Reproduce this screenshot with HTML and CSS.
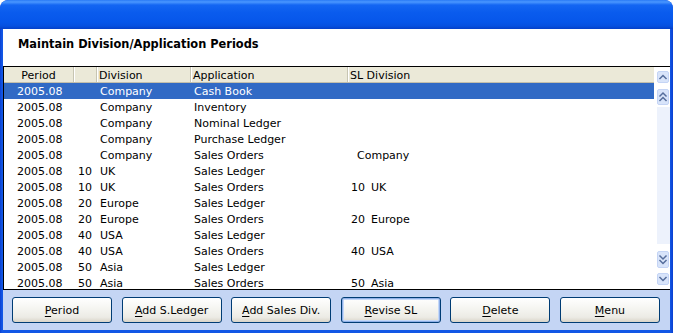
FILE: index.html
```html
<!DOCTYPE html>
<html>
<head>
<meta charset="utf-8">
<link rel="stylesheet" href="styles.css">
</head>
<body>
<div class="window">
  <div class="titlebar"></div>
  <div class="client">
    <div class="heading">Maintain Division/Application Periods</div>
    <div class="grid">
      <div class="table">
        <div class="row head">
          <div class="c period">Period</div>
          <div class="c code"></div>
          <div class="c div">Division</div>
          <div class="c app">Application</div>
          <div class="c sl">SL Division</div>
        </div>
        <div class="rows">
          <div class="row sel"><div class="c period">2005.08</div><div class="c code"></div><div class="c div">Company</div><div class="c app">Cash Book</div><div class="c sl"></div></div>
          <div class="row"><div class="c period">2005.08</div><div class="c code"></div><div class="c div">Company</div><div class="c app">Inventory</div><div class="c sl"></div></div>
          <div class="row"><div class="c period">2005.08</div><div class="c code"></div><div class="c div">Company</div><div class="c app">Nominal Ledger</div><div class="c sl"></div></div>
          <div class="row"><div class="c period">2005.08</div><div class="c code"></div><div class="c div">Company</div><div class="c app">Purchase Ledger</div><div class="c sl"></div></div>
          <div class="row"><div class="c period">2005.08</div><div class="c code"></div><div class="c div">Company</div><div class="c app">Sales Orders</div><div class="c sl"><span class="slname">Company</span></div></div>
          <div class="row"><div class="c period">2005.08</div><div class="c code">10</div><div class="c div">UK</div><div class="c app">Sales Ledger</div><div class="c sl"></div></div>
          <div class="row"><div class="c period">2005.08</div><div class="c code">10</div><div class="c div">UK</div><div class="c app">Sales Orders</div><div class="c sl"><span class="slc">10</span>UK</div></div>
          <div class="row"><div class="c period">2005.08</div><div class="c code">20</div><div class="c div">Europe</div><div class="c app">Sales Ledger</div><div class="c sl"></div></div>
          <div class="row"><div class="c period">2005.08</div><div class="c code">20</div><div class="c div">Europe</div><div class="c app">Sales Orders</div><div class="c sl"><span class="slc">20</span>Europe</div></div>
          <div class="row"><div class="c period">2005.08</div><div class="c code">40</div><div class="c div">USA</div><div class="c app">Sales Ledger</div><div class="c sl"></div></div>
          <div class="row"><div class="c period">2005.08</div><div class="c code">40</div><div class="c div">USA</div><div class="c app">Sales Orders</div><div class="c sl"><span class="slc">40</span>USA</div></div>
          <div class="row"><div class="c period">2005.08</div><div class="c code">50</div><div class="c div">Asia</div><div class="c app">Sales Ledger</div><div class="c sl"></div></div>
          <div class="row"><div class="c period">2005.08</div><div class="c code">50</div><div class="c div">Asia</div><div class="c app">Sales Orders</div><div class="c sl"><span class="slc">50</span>Asia</div></div>
        </div>
      </div>
      <div class="scroll">
        <svg class="sb sb1 up1" width="12" height="12" viewBox="0 0 12 12"><rect x="0.5" y="0.5" width="11" height="11" rx="1.5" class="sbbg"/><polyline points="3,7.5 6,4.5 9,7.5" class="chev"/></svg>
        <svg class="sb sb2 up2" width="12" height="16" viewBox="0 0 12 16"><rect x="0.5" y="0.5" width="11" height="15" rx="1.5" class="sbbg"/><polyline points="3,7 6,4 9,7" class="chev"/><polyline points="3,11.5 6,8.5 9,11.5" class="chev"/></svg>
        <div class="track"></div>
        <svg class="sb sb2 dn2" width="12" height="17" viewBox="0 0 12 17"><rect x="0.5" y="0.5" width="11" height="16" rx="1.5" class="sbbg"/><polyline points="3,5 6,8 9,5" class="chev"/><polyline points="3,9.5 6,12.5 9,9.5" class="chev"/></svg>
        <svg class="sb sb1 dn1" width="12" height="12" viewBox="0 0 12 12"><rect x="0.5" y="0.5" width="11" height="11" rx="1.5" class="sbbg"/><polyline points="3,4.5 6,7.5 9,4.5" class="chev"/></svg>
      </div>
    </div>
    <div class="footer">
      <button class="btn"><u>P</u>eriod</button>
      <button class="btn"><u>A</u>dd S.Ledger</button>
      <button class="btn"><u>A</u>dd Sales Div.</button>
      <button class="btn focus"><u>R</u>evise SL</button>
      <button class="btn"><u>D</u>elete</button>
      <button class="btn"><u>M</u>enu</button>
    </div>
  </div>
</div>
</body>
</html>
```
FILE: styles.css
```css
html, body {
  margin: 0;
  padding: 0;
  background: #ffffff;
}
.window {
  width: 673px;
  height: 333px;
  box-sizing: border-box;
  background: linear-gradient(90deg, #0a3fd0 0, #1257e6 2px, #1257e6 670px, #0a3fd0 673px);
  border-radius: 8px 8px 0 0;
  display: flex;
  flex-direction: column;
  overflow: hidden;
  font-family: "DejaVu Sans", sans-serif;
  font-size: 11px;
}
.titlebar {
  height: 29px;
  flex: none;
  background: linear-gradient(180deg, #2a7af5 0, #4a97ff 2px, #1466f2 5px, #0a5cee 12px, #0656ea 22px, #0650e0 26px, #0440c8 29px);
  border-radius: 8px 8px 0 0;
}
.client {
  margin: 0 3px 3px 3px;
  flex: 1;
  display: flex;
  flex-direction: column;
  min-height: 0;
}
.heading {
  height: 37px;
  flex: none;
  background: #ffffff;
  padding: 8px 0 0 15px;
  box-sizing: border-box;
  font-weight: bold;
  font-size: 11.4px;
  line-height: 14px;
  color: #000;
}
.grid {
  height: 223px;
  flex: none;
  box-sizing: border-box;
  border-top: 1px solid #000;
  border-left: 1px solid #000;
  background: #fff;
  display: flex;
}
.table {
  width: 650px;
  flex: none;
  display: flex;
  flex-direction: column;
  overflow: hidden;
}
.row {
  display: flex;
  height: 16px;
  line-height: 18px;
  overflow: hidden;
  white-space: nowrap;
  color: #000;
  flex: none;
}
.row.head {
  background: #ebe9d8;
  border-bottom: 1px solid #c3bfac;
  height: 15px;
  line-height: 18px;
}
.rows {
  flex: 1;
  overflow: hidden;
}
.row.sel {
  background: #316ac5;
  color: #fff;
}
.c {
  box-sizing: border-box;
  overflow: hidden;
}
.period { width: 70px; padding-left: 13px; }
.code { width: 23px; text-align: right; padding-right: 5px; }
.div { width: 94px; padding-left: 3px; }
.app { width: 157px; padding-left: 3px; }
.sl { flex: 1; padding-left: 3px; }
.head .c {
  border-right: 1px solid #c7c5b2;
  box-shadow: inset 1px 0 0 #ffffff;
}
.head .period { padding-left: 0; text-align: center; box-shadow: none; }
.head .div, .head .app, .head .sl { padding-left: 2px; }
.head .sl { border-right: none; }
.slc {
  display: inline-block;
  width: 20px;
}
.slname { padding-left: 6px; }
.scroll {
  width: 16px;
  flex: none;
  box-sizing: border-box;
  padding: 0 0 0 3px;
  display: flex;
  flex-direction: column;
  background: #fff;
}
.sb { display: block; flex: none; }
.up1 { margin-top: 4px; }
.up2 { margin-top: 6px; }
.track {
  flex: 1;
  margin-top: 2px;
  background: #edf2fc;
}
.dn2 { margin-top: 7px; }
.dn1 { margin-top: 5px; margin-bottom: 4px; }
.sbbg { fill: #d8e4fa; stroke: #c4d4f5; stroke-width: 1; }
.chev { fill: none; stroke: #566e9c; stroke-width: 1.5; stroke-linecap: square; }
.footer {
  flex: 1;
  background: #c4d5f4;
  border-top: 1px solid #000;
  display: flex;
  align-items: flex-start;
  gap: 9.6px;
  padding: 7px 0 0 9px;
}
.btn {
  width: 100px;
  height: 26px;
  box-sizing: border-box;
  border: 1px solid #003c74;
  border-radius: 3px;
  background: linear-gradient(180deg, #ffffff 0, #f6f6f2 40%, #ecebe5 80%, #d9d4c8 100%);
  font-family: "DejaVu Sans", sans-serif;
  font-size: 11px;
  color: #000;
  padding: 0;
  margin: 0;
  flex: none;
}
.btn.focus {
  box-shadow: inset 0 0 0 1px #8fb0e8, inset 0 0 0 2px #c5d8f8;
}
.btn u { text-decoration: underline; text-underline-offset: 2px; }
```
